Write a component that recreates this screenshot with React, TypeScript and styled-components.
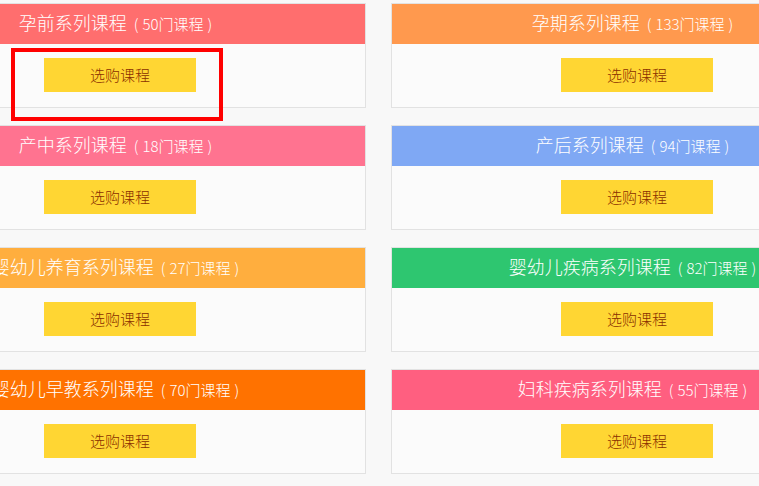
import React from "react";
import styled, { createGlobalStyle } from "styled-components";

const GlobalStyle = createGlobalStyle`
  html, body {
    margin: 0;
    padding: 0;
    background: #f8f8f8;
    overflow: hidden;
  }
  body {
    font-family: "Noto Sans CJK SC", "Microsoft YaHei", sans-serif;
  }
`;

type Series = {
  title: string;
  count: number;
  color: string;
};

const series: Series[] = [
  { title: "孕前系列课程", count: 50, color: "#ff6e6e" },
  { title: "孕期系列课程", count: 133, color: "#ff994e" },
  { title: "产中系列课程", count: 18, color: "#ff7390" },
  { title: "产后系列课程", count: 94, color: "#7fa8f4" },
  { title: "婴幼儿养育系列课程", count: 27, color: "#ffae3e" },
  { title: "婴幼儿疾病系列课程", count: 82, color: "#2ec670" },
  { title: "婴幼儿早教系列课程", count: 70, color: "#ff7200" },
  { title: "妇科疾病系列课程", count: 55, color: "#ff5f80" },
];

const Grid = styled.div`
  display: grid;
  grid-template-columns: 492px 492px;
  column-gap: 25px;
  row-gap: 17px;
  width: 1009px;
  margin-left: -126px;
  padding-top: 3px;
`;

const Card = styled.div`
  border: 1px solid #e2e2e2;
  background: #fbfbfb;
`;

const Header = styled.div<{ $color: string }>`
  height: 40px;
  line-height: 37px;
  padding-right: 5px;
  background: ${(p) => p.$color};
  color: #fff;
  text-align: center;
  font-size: 18px;
  font-weight: 300;
  white-space: nowrap;
`;

const Count = styled.span`
  font-size: 15px;
  margin-left: 3px;
`;

const Paren = styled.span`
  margin: 0 4px;
`;

const Body = styled.div`
  position: relative;
  display: flex;
  justify-content: center;
  padding: 14px 0 15px;
`;

const BuyButton = styled.button`
  width: 152px;
  height: 34px;
  border: none;
  background: #ffd633;
  color: #8a2f00;
  font-family: inherit;
  font-size: 15px;
  font-weight: 300;
  padding: 0 0 2px;
  cursor: pointer;
`;

const Highlight = styled.div`
  position: absolute;
  left: 136px;
  top: 4px;
  width: 204px;
  height: 65px;
  border: 4px solid #ff0000;
  pointer-events: none;
`;

const App = () => {
  return (
    <>
      <GlobalStyle />
      <Grid>
        {series.map((s, i) => (
          <Card key={s.title}>
            <Header $color={s.color}>
              {s.title}
              <Count>
                <Paren>(</Paren>
                {s.count}门课程
                <Paren>)</Paren>
              </Count>
            </Header>
            <Body>
              <BuyButton>选购课程</BuyButton>
              {i === 0 && <Highlight />}
            </Body>
          </Card>
        ))}
      </Grid>
    </>
  );
};

export default App;
